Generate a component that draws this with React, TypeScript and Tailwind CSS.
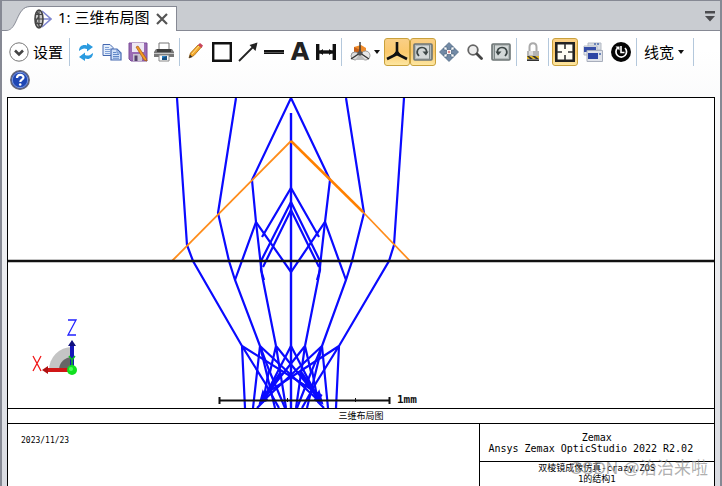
import { ReactNode } from 'react';

interface ToolButtonProps {
    label: string;
    active?: boolean;
    children: ReactNode;
}

function ToolButton({ label, active, children }: ToolButtonProps) {
    return (
        <button
            type="button"
            aria-label={label}
            className={
                active
                    ? 'flex h-7 w-[26px] items-center justify-center rounded-[3px] border border-[#c9a13c] bg-linear-to-b from-[#f9cf86] via-[#fbc96c] to-[#fde6a0]'
                    : 'flex h-7 w-[26px] items-center justify-center rounded-[3px] hover:bg-[#fde6a0]'
            }
        >
            {children}
        </button>
    );
}

function Separator() {
    return <span className="mr-[3px] ml-[2px] h-7 w-px bg-[#b4c8dc]" />;
}

function Caret() {
    return (
        <svg width="6" height="4" viewBox="0 0 6 4">
            <path d="M0 0h6L3 4z" fill="#111" />
        </svg>
    );
}

function LensIcon() {
    return (
        <svg width="18" height="20" viewBox="0 0 18 20" fill="none">
            <path d="M8 2l9 8-9 8M8 10h9" stroke="#8088d0" strokeWidth="1.6" />
            <ellipse cx="5" cy="10" rx="4" ry="9" fill="#c8c8c8" stroke="#444" strokeWidth="1.6" />
            <path d="M5 1v18M1 10h8M2 5.5h6M2 14.5h6M3 3l2 4-3 5 4 6" stroke="#444" strokeWidth="1.2" />
        </svg>
    );
}

function ExpandIcon() {
    return (
        <svg width="20" height="20" viewBox="0 0 20 20" fill="none">
            <circle cx="10" cy="10" r="9.2" fill="#fff" stroke="#777" />
            <path d="M6 8.5l4 4 4-4" stroke="#444" strokeWidth="2.6" />
        </svg>
    );
}

function RefreshIcon() {
    return (
        <svg width="16" height="20" viewBox="0 0 16 20" fill="#2b9be0">
            <path d="M1 9C1 4 5 2 9 3.5V1l6 4-6 4.5V7C6 5.8 4 6.5 1 9z" />
            <path d="M15 11c0 5-4 7-8 5.5V19l-6-4 6-4.5V13c3 1.2 5 .5 8-2z" />
        </svg>
    );
}

function CopyIcon() {
    return (
        <svg width="20" height="18" viewBox="0 0 20 18" stroke="#4468b0">
            <path d="M1 1.5h7l3 3v8H1z" fill="#e2edfb" />
            <path d="M3 4.5h4M3 6.5h5M3 8.5h5M3 10.5h5" stroke="#7fa0d8" />
            <path d="M9 6h6l4 4v7H9z" fill="#cfe0f8" strokeWidth="1.2" />
            <path d="M15 6v4h4M11 9.5h3M11 11.5h6M11 13.5h6M11 15.2h6" fill="none" stroke="#6088c8" />
        </svg>
    );
}

function SaveIcon() {
    return (
        <svg width="20" height="20" viewBox="0 0 20 20">
            <path d="M1 1h18v18H3l-2-2z" fill="#9a6bb4" stroke="#7b4d98" />
            <path d="M4 1h12v9H4z" fill="#eee8f4" />
            <path d="M5 12h9v7H5z" fill="#c9c2d2" />
            <path d="M6.5 13.5h3V19h-3z" fill="#54406a" />
            <path d="M8 5l2-1 8 12 1 3-3-1z" fill="#f59a22" stroke="#a45a12" strokeWidth=".7" />
        </svg>
    );
}

function PrintIcon() {
    return (
        <svg width="20" height="20" viewBox="0 0 20 20">
            <path d="M5 1h10v7H5z" fill="#fff" stroke="#777" />
            <path d="M2 7h16l2 3v5H0v-5z" fill="#777" />
            <path d="M3 7h14v3H3z" fill="#3f3f3f" />
            <path d="M0 11h20v1H0z" fill="#c6c6c6" />
            <path d="M5 13h10v6H5z" fill="#fff" stroke="#888" />
            <path d="M8 14h5v4H8z" fill="#2e86cc" />
            <path d="M8 16l5-2v4H8z" fill="#195080" />
        </svg>
    );
}

function PencilIcon() {
    return (
        <svg width="16" height="20" viewBox="0 0 16 20">
            <path d="M1 16l1.5-5L10 3l3.500 2L6 13.5z" fill="#f4a92c" stroke="#a8680f" strokeWidth=".8" />
            <path d="M1 16l1-3.5L4.500 15z" fill="#333" />
            <path d="M10 3l2-2 3 2.500-1.500 2.500z" fill="#c8455c" />
            <path d="M4 12l7-8" stroke="#ffe08c" />
        </svg>
    );
}

function SquareIcon() {
    return (
        <svg width="20" height="20" viewBox="0 0 20 20">
            <path d="M1.2 1.2h17.6v17.6H1.2z" fill="#fff" stroke="#111" strokeWidth="2.4" />
        </svg>
    );
}

function ArrowIcon() {
    return (
        <svg width="20" height="20" viewBox="0 0 20 20">
            <path d="M1 19L15 5" stroke="#222" strokeWidth="1.8" />
            <path d="M19.5 .5l-2 8.500-6-6z" fill="#222" />
        </svg>
    );
}

function LineIcon() {
    return (
        <svg width="20" height="6" viewBox="0 0 20 6">
            <path d="M0 1h20v4H0z" fill="#111" />
            <path d="M0 3h20v1H0z" fill="#555" />
        </svg>
    );
}

function DimensionIcon() {
    return (
        <svg width="20" height="16" viewBox="0 0 20 16" stroke="#111">
            <path d="M1.7 0v16M18.3 0v16" strokeWidth="3.4" />
            <path d="M2 8h16" strokeWidth="3.4" />
            <path d="M3 8l4-3v6zM17 8l-4-3v6z" fill="#111" stroke="none" />
        </svg>
    );
}

function OrientationIcon() {
    return (
        <svg width="21" height="20" viewBox="0 0 21 20">
            <path d="M4 5l7-2 5 3v6H4z" fill="#ef8b2a" />
            <path d="M4 5l6 3v5l-6-2z" fill="#c65f18" />
            <circle cx="5" cy="14" r="4" fill="#ddd" stroke="#999" />
            <circle cx="15.5" cy="13.5" r="4.5" fill="#e8e8e8" stroke="#999" />
            <path d="M5 18l5-6 6 6z" fill="#bbb" />
            <path d="M10 0v11M10 11l-9 6M10 11l9 6" stroke="#333" strokeWidth="1.4" />
            <path d="M7 11l3-3 3 3-3 3z" fill="#555" />
        </svg>
    );
}

function AxesIcon() {
    return (
        <svg width="22" height="20" viewBox="0 0 22 20">
            <path d="M11 0v12M11 12l-10 5M11 12l10 5" stroke="#111" strokeWidth="2.6" />
            <path d="M11 8l5 6-5-1-5 1z" fill="#111" />
        </svg>
    );
}

function RotateIcon({ flip }: { flip?: boolean }) {
    return (
        <svg width="20" height="18" viewBox="0 0 20 18" className={flip ? '-scale-x-100' : ''}>
            <rect x="1" y="1" width="18" height="16" rx="1" fill="#b4baba" stroke="#6d7575" strokeWidth="1.6" />
            <path d="M3 3h14v12H3z" fill="#d3d8d8" />
            <path d="M6 13C2 9 5 4.5 9 4.5c3 0 5 2 4.5 5" fill="none" stroke="#3c4646" strokeWidth="1.7" />
            <path d="M9.5 8.5h6L13 12.5z" fill="#3c4646" />
            <path d="M16.5 2v14" stroke="#7c8686" />
        </svg>
    );
}

function MoveIcon() {
    return (
        <svg width="20" height="20" viewBox="0 0 20 20" fill="#7189a5" stroke="#4a6480" strokeWidth=".7">
            <path d="M10 .5l4.500 4.500h-2.500v2.5h-4V5H5.500z" />
            <path d="M10 19.500l4.500-4.500h-2.500v-2.5h-4V15H5.500z" />
            <path d="M.5 10L5 5.500v2.500h2.5v4H5v2.500z" />
            <path d="M19.500 10L15 5.500v2.500h-2.5v4H15v2.500z" />
            <circle cx="10" cy="10" r="1.3" fill="#d88" stroke="none" />
        </svg>
    );
}

function ZoomIcon() {
    return (
        <svg width="16" height="16" viewBox="0 0 16 16">
            <circle cx="6" cy="6" r="4.800" fill="#eee" stroke="#666" strokeWidth="1.800" />
            <path d="M10 10l4.500 4.500" stroke="#444" strokeWidth="2.800" strokeLinecap="round" />
        </svg>
    );
}

function LockIcon() {
    return (
        <svg width="14" height="20" viewBox="0 0 14 20">
            <path d="M3.5 10V5c0-5 7-5 7 0v5" fill="none" stroke="#aaa" strokeWidth="2" />
            <path d="M1 9h12v10H1z" fill="#b4b4b4" />
            <path d="M3 9h4v4H3z" fill="#ddd" />
            <path d="M1 14h12v3H1z" fill="#e2b72a" />
            <path d="M1 14l3 3h3l-4-3zM6 14l4 3h3l-4-3zM1 17.500h12V19H1z" fill="#333" />
        </svg>
    );
}

function FitIcon() {
    return (
        <svg width="20" height="20" viewBox="0 0 20 20">
            <path d="M1.200 1.200h17.600v17.600H1.200z" fill="#fffdf4" stroke="#222" strokeWidth="2.800" />
            <path d="M10 2v5M10 13v5M2 10h5M13 10h5" stroke="#333" strokeWidth="1.600" />
        </svg>
    );
}

function WindowsIcon() {
    return (
        <svg width="20" height="20" viewBox="0 0 20 20">
            <path d="M5 1h13v7H5z" fill="#d8dde4" stroke="#b4bac4" />
            <path d="M11 1h2v2h-2zM14 1h2v2h-2z" fill="#6c85b8" />
            <path d="M1 4h13v9H1z" fill="#e6eaf0" stroke="#b4bac4" />
            <path d="M1 5h12v5H1z" fill="#354da8" />
            <path d="M4 8.5h15.5v11H4z" fill="#e0e3ea" stroke="#a8aebc" />
            <path d="M5 11h10v6H5z" fill="#2d45a4" />
            <path d="M16 11h2v2h-2z" fill="#6c85b8" />
        </svg>
    );
}

function ClockIcon() {
    return (
        <svg width="20" height="20" viewBox="0 0 20 20" fill="none">
            <circle cx="10" cy="10" r="10" fill="#050505" />
            <path d="M6.5 6a5.300 5.300 0 1 0 7.5 0" stroke="#fff" strokeWidth="1.700" />
            <path d="M4.5 4.5h4v4z" fill="#fff" />
            <path d="M10 4v6.500h3.500" stroke="#fff" strokeWidth="1.600" />
        </svg>
    );
}

function HelpIcon() {
    return (
        <svg width="20" height="20" viewBox="0 0 20 20">
            <circle cx="10" cy="10" r="9.200" fill="#1e46b4" stroke="#667" strokeWidth="1.500" />
            <circle cx="10" cy="10" r="7.700" fill="none" stroke="#7f9ade" />
            <path d="M7 8c0-4 6.500-4 6.500-.5 0 2.200-3.200 2.200-3.200 4.500" fill="none" stroke="#fff" strokeWidth="2.200" />
            <circle cx="10.200" cy="14.500" r="1.300" fill="#fff" />
        </svg>
    );
}

const rays = [
    'M177 98L187 245L193 261L242 346L245 408',
    'M404 98L394 245L389 261L339 346L336 408',
    'M236 98L218 213L229 261L235 280L260 346L253 408',
    'M346 98L364 213L352 261L346 280L322 346L328 408',
    'M291 98L252 180L256 222L262 275L276 346',
    'M291 98L330 180L325 222L319 275L305 346',
    'M235 280L256 222L291 272L325 222L346 280',
    'M262 237L291 188L319 237',
    'M261 261L291 202L320 261',
    'M263 267L291 210L319 267',
    'M261 259V270L264 280',
    'M320 259V270L317 280',
    // crossing fan under the second surface
    'M242 346L322 396M242 346L265 383L279 408',
    'M339 346L262 396M339 346L316 383L302 408',
    'M260 346L320 402M260 346L269 370L263 402L257 408',
    'M322 346L262 402M322 346L312 370L318 402L324 408',
    'M276 346L270 372M276 346L320 400M276 346L286 408',
    'M305 346L311 372M305 346L262 400M305 346L296 408',
    'M291 346L262 402M291 346L320 402',
    'M269 370L285 408M312 370L297 408',
    'M260 346L275 408M322 346L307 408',
];

function Layout3D() {
    return (
        <svg
            role="img"
            aria-label="三维布局图"
            viewBox="8 98 706 310"
            className="block h-[310px] w-full bg-white"
            fill="none"
        >
            <g stroke="#0a0aff" strokeWidth="2.2">
                {rays.map((d) => (
                    <path key={d} d={d} />
                ))}
                <path d="M291 113V408" strokeWidth="2.4" />
                <path d="M281 373L262 401M301 373L320 401" strokeWidth="4" />
            </g>
            <path d="M263 392l4 8-7 3zM319 392l-4 8 7 3z" fill="#0a0aff" stroke="#0a0aff" strokeWidth="2" />
            <path d="M172 261L291 141" stroke="#ff8c1a" strokeWidth="1.8" />
            <path d="M291 141L363 212" stroke="#ff8000" strokeWidth="2.5" />
            <path d="M363 212L410 261" stroke="#ff8c1a" strokeWidth="1.7" />
            <path d="M8 261H714" stroke="#111" strokeWidth="2.5" />
            <path d="M219 400.500H390" stroke="#111" strokeWidth="2.2" />
            <path d="M219.500 397v7M389.500 397v7" stroke="#111" strokeWidth="2" />
            <path d="M287.500 398v4M355.500 398v4" stroke="#111" />
            <text x="397" y="403" fill="#111" className="font-['DejaVu_Sans_Mono',monospace] text-[11px] font-bold">
                1mm
            </text>

            {/* axis triad */}
            <path d="M72 370H49A23 23 0 0 1 72 347z" fill="#c4c4c4" />
            <path d="M72 370H59A13 13 0 0 1 72 357z" fill="#666" />
            <path d="M72 370V344" stroke="#1616b8" strokeWidth="4" />
            <path d="M72 340l-4 6h8z" fill="#10107c" />
            <path d="M72 370H46" stroke="#d01616" strokeWidth="4" />
            <path d="M42 370l6-4v8z" fill="#b01010" />
            <path d="M69 356l3 4 3-4M72 360v6" stroke="#10c020" strokeWidth="1.5" />
            <circle cx="72" cy="370" r="5" fill="#10e020" />
            <circle cx="71" cy="369" r="2" fill="#50ff60" />
            <path d="M33 356l8 15M41 356l-8 15" stroke="#f01818" strokeWidth="1.3" />
            <path d="M68 320h8l-8 15h8" stroke="#2222ff" strokeWidth="1.3" />
        </svg>
    );
}

function TabBar() {
    return (
        <header className="flex h-[30px] items-end justify-between border-b border-[#868994] bg-[#c9ccd1]">
            <div role="tablist" className="-mb-px ml-1 flex h-[25px]">
                <svg width="24" height="25" viewBox="0 0 24 25">
                    <path d="M0 25V24C12 24 10 1 24 1V25z" fill="#fff" />
                    <path d="M0 24.5C12 24.5 10 .5 24 .5" fill="none" stroke="#868994" />
                </svg>
                <div className="flex items-center border-t border-r border-[#868994] bg-white pr-2 pl-1">
                    <button type="button" role="tab" aria-selected="true" className="flex items-center text-[15px]">
                        <LensIcon />
                        <span className="ml-[6px] pb-1 leading-5 whitespace-pre">1: 三维布局图</span>
                    </button>
                    <button type="button" aria-label="关闭" className="ml-[6px]">
                        <svg width="12" height="12" viewBox="0 0 12 12">
                            <path d="M1 1l10 10M11 1L1 11" stroke="#555" strokeWidth="2.2" />
                        </svg>
                    </button>
                </div>
            </div>
            <button type="button" aria-label="窗口列表" className="mr-[5px] mb-2">
                <svg width="10" height="11" viewBox="0 0 10 11" fill="#4c4c50">
                    <path d="M0 0h10v2.5H0zM0 5h10l-5 5.5z" />
                </svg>
            </button>
        </header>
    );
}

function Toolbar() {
    return (
        <div role="toolbar" className="flex flex-wrap items-center pt-[7px] pr-2 pb-[3px] pl-[5px] text-[15px]">
            <button type="button" className="flex w-[60px] items-center gap-1 pl-[2px] whitespace-nowrap">
                <ExpandIcon />
                设置
            </button>
            <Separator />
            <ToolButton label="更新"><RefreshIcon /></ToolButton>
            <ToolButton label="复制"><CopyIcon /></ToolButton>
            <ToolButton label="保存"><SaveIcon /></ToolButton>
            <ToolButton label="打印"><PrintIcon /></ToolButton>
            <Separator />
            <ToolButton label="注释"><PencilIcon /></ToolButton>
            <ToolButton label="矩形"><SquareIcon /></ToolButton>
            <ToolButton label="箭头"><ArrowIcon /></ToolButton>
            <ToolButton label="直线"><LineIcon /></ToolButton>
            <ToolButton label="文本">
                <span className="font-['DejaVu_Sans',sans-serif] text-[24px] leading-5 font-bold text-[#222]">A</span>
            </ToolButton>
            <ToolButton label="尺寸"><DimensionIcon /></ToolButton>
            <Separator />
            <button type="button" aria-label="视图方向" className="flex h-7 w-[39px] items-center gap-[3px] pl-[5px]">
                <OrientationIcon />
                <Caret />
            </button>
            <ToolButton label="坐标轴" active><AxesIcon /></ToolButton>
            <ToolButton label="旋转" active><RotateIcon /></ToolButton>
            <ToolButton label="平移"><MoveIcon /></ToolButton>
            <ToolButton label="缩放"><ZoomIcon /></ToolButton>
            <ToolButton label="重置视图"><RotateIcon flip /></ToolButton>
            <Separator />
            <ToolButton label="锁定"><LockIcon /></ToolButton>
            <Separator />
            <div className="flex gap-[2px]">
                <ToolButton label="适合窗口" active><FitIcon /></ToolButton>
                <ToolButton label="克隆窗口"><WindowsIcon /></ToolButton>
                <ToolButton label="自动更新"><ClockIcon /></ToolButton>
            </div>
            <Separator />
            <button type="button" className="flex h-7 items-center gap-1 pr-[7px] pl-1 whitespace-nowrap">
                线宽
                <Caret />
            </button>
            <Separator />
            <ToolButton label="帮助"><HelpIcon /></ToolButton>
        </div>
    );
}

function TitleBlock() {
    return (
        <footer className="flex flex-1 border-t border-black font-['DejaVu_Sans_Mono','Noto_Sans_CJK_SC',monospace]">
            <p className="flex-1 pt-[11px] pl-[13px] text-[8px] leading-[11px]">2023/11/23</p>
            <div className="w-1/3 border-l border-black text-center">
                <div className="border-b border-black pt-2 pb-[7px] text-[10px] leading-[11px] whitespace-pre">
                    <p>Zemax</p>
                    <p>{'Ansys Zemax OpticStudio 2022 R2.02\u00a0\u00a0'}</p>
                </div>
                <div className="pt-px text-[9px] leading-[11px]">
                    <p>双棱镜成像仿真-crazy.ZOS</p>
                    <p>1的结构1</p>
                </div>
            </div>
        </footer>
    );
}

export default function App() {
    return (
        <main className="relative flex min-h-screen flex-col border-x-2 border-t border-[#868994] bg-linear-to-b from-white from-10% to-[#d9dbe1] font-['Noto_Sans','Noto_Sans_CJK_SC',sans-serif] text-black">
            <TabBar />
            <Toolbar />
            <section className="mx-[5px] flex flex-1 flex-col border-x border-t border-black bg-white">
                <Layout3D />
                <h1 className="border-t border-black text-center font-['Noto_Sans_CJK_SC',sans-serif] text-[9px] leading-[14px]">
                    三维布局图
                </h1>
                <TitleBlock />
            </section>
            <p className="pointer-events-none absolute right-3 bottom-[5px] font-['Liberation_Sans','Noto_Sans_CJK_SC',sans-serif] text-[17px] leading-6 text-[#8c8c8c]/70">
                CSDN @治治来啦
            </p>
        </main>
    );
}
